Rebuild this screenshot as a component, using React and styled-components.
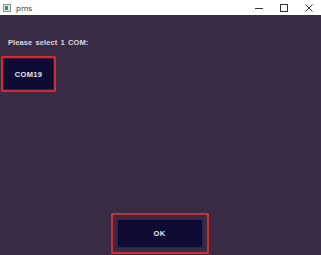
import React from "react";
import styled, { createGlobalStyle } from "styled-components";

const GlobalStyle = createGlobalStyle`
  html, body {
    margin: 0;
    padding: 0;
    background: #3a2b45;
  }
  body {
    font-family: "Liberation Sans", Arial, sans-serif;
  }
`;

function App() {
  return (
    <Window>
      <GlobalStyle />
      <TitleBar>
        <AppIcon>
          <svg width="8" height="8" viewBox="0 0 8 8">
            <rect x="0.5" y="0.5" width="7" height="7" fill="#dfe6e4" stroke="#8a9694" />
            <rect x="2" y="2" width="3" height="4" fill="#3f8a6a" />
          </svg>
        </AppIcon>
        <Title>pms</Title>
        <Controls>
          <Ctrl>
            <svg width="10" height="10" viewBox="0 0 10 10">
              <line x1="1" y1="5.5" x2="9" y2="5.5" stroke="#333" strokeWidth="1" />
            </svg>
          </Ctrl>
          <Ctrl>
            <svg width="10" height="10" viewBox="0 0 10 10">
              <rect x="1.5" y="1.5" width="7" height="7" fill="none" stroke="#333" strokeWidth="1" />
            </svg>
          </Ctrl>
          <Ctrl>
            <svg width="10" height="10" viewBox="0 0 10 10">
              <path d="M1.5 1.5 L8.5 8.5 M8.5 1.5 L1.5 8.5" stroke="#333" strokeWidth="1" />
            </svg>
          </Ctrl>
        </Controls>
      </TitleBar>
      <Body>
        <Prompt>Please select 1 COM:</Prompt>
        <PortButton>COM19</PortButton>
        <Footer>
          <OkButton>OK</OkButton>
        </Footer>
      </Body>
    </Window>
  );
}

export default App;

const Window = styled.div`
  width: 321px;
  height: 255px;
  display: flex;
  flex-direction: column;
  background: #3a2b45;
  overflow: hidden;
`;

const TitleBar = styled.div`
  height: 15px;
  background: #ffffff;
  display: flex;
  align-items: center;
  padding-left: 3px;
  box-sizing: border-box;
`;

const AppIcon = styled.div`
  width: 8px;
  height: 8px;
  display: flex;
`;

const Title = styled.span`
  font-family: "Open Sans", sans-serif;
  font-size: 8px;
  color: #333;
  margin-left: 5px;
  margin-top: -1px;
`;

const Controls = styled.div`
  margin-left: auto;
  display: flex;
  height: 100%;
`;

const Ctrl = styled.div`
  width: 25px;
  display: flex;
  align-items: center;
  justify-content: center;
`;

const Body = styled.div`
  flex: 1;
  display: flex;
  flex-direction: column;
  padding: 0 0 0 1px;
`;

const Prompt = styled.div`
  font-size: 7.5px;
  font-weight: bold;
  color: #dcd8e2;
  margin: 23px 0 0 7px;
  letter-spacing: 0.1px;
  word-spacing: 1px;
  line-height: 10px;
`;

const DarkButton = styled.button`
  background: #0e0c34;
  color: #e8e8f0;
  font-family: "Liberation Sans", Arial, sans-serif;
  font-size: 7.5px;
  font-weight: bold;
  letter-spacing: 0.3px;
  cursor: pointer;
  padding: 0;
`;

const PortButton = styled(DarkButton)`
  width: 55px;
  height: 36px;
  margin-top: 8px;
  border: 2px solid #d22a2d;
  border-radius: 1px;
  box-shadow: inset 0 0 0 1px #2a1f4a;
`;

const Footer = styled.div`
  margin-top: auto;
  display: flex;
  justify-content: center;
  padding-bottom: 1px;
  padding-right: 3px;
`;

const OkButton = styled(DarkButton)`
  width: 98px;
  height: 41px;
  border: 2px solid #d22a2d;
  border-radius: 1px;
  box-shadow: inset 0 0 0 4px #3a2b45, inset 0 0 0 5px #2c2050;
`;
